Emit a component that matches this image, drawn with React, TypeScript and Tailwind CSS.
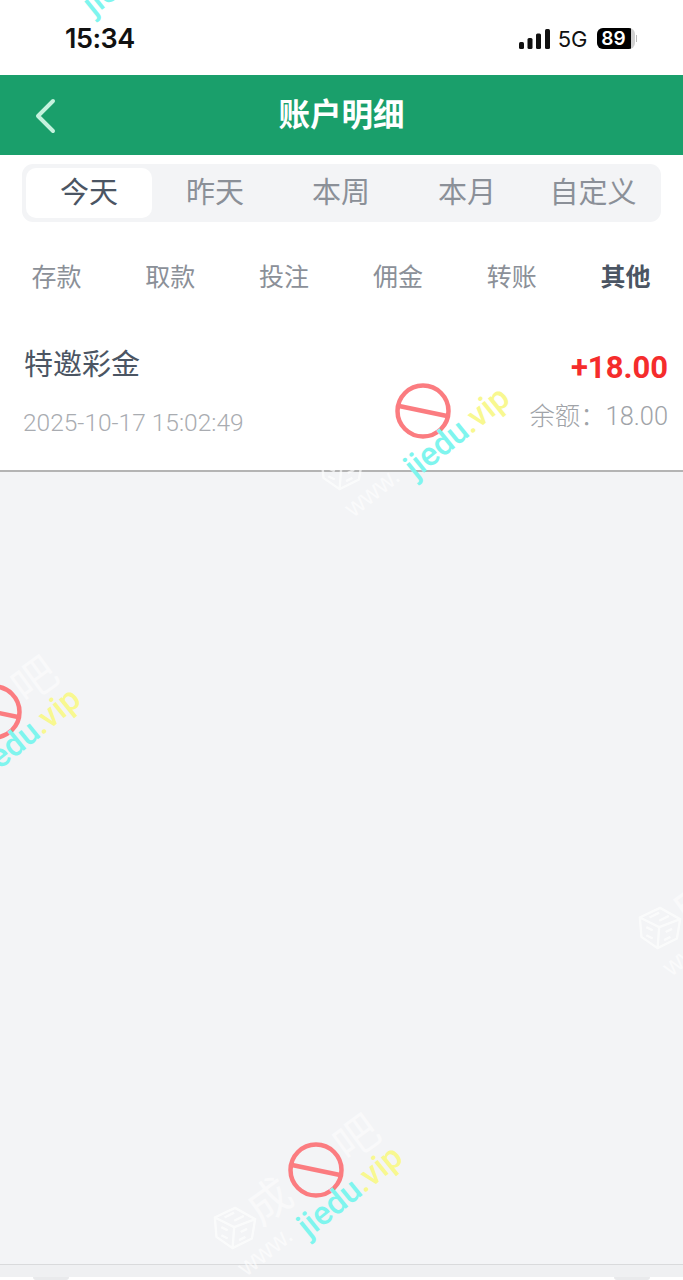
import React from 'react';

const cjk = "font-['Roboto','Noto_Sans_CJK_SC',sans-serif]";

const periods = ['今天', '昨天', '本周', '本月', '自定义'];
const filters = ['存款', '取款', '投注', '佣金', '转账', '其他'];

const StatusBar: React.FC = () => (
  <div className="flex h-[75px] items-center justify-between pl-[65px] pr-[46px] bg-white">
    <span className="text-[27px] font-semibold font-['Inter',sans-serif] text-[#111] leading-none tracking-[-0.5px] mt-[2px]">15:34</span>
    <div className="flex items-center mt-[2px]">
      <svg width="31" height="20" viewBox="0 0 31 20" fill="#111">
        <rect x="0" y="13" width="5" height="7" rx="1.5" />
        <rect x="8.5" y="9" width="5" height="11" rx="1.5" />
        <rect x="17" y="4.5" width="5" height="15.5" rx="1.5" />
        <rect x="26" y="0" width="5" height="20" rx="1.5" />
      </svg>
      <span className="ml-2 text-[22px] font-['Inter',sans-serif] text-[#111] leading-none">5G</span>
      <div className="ml-[9px] flex items-center">
        <div className="flex h-[21px] w-[38px] items-center rounded-[6px] overflow-hidden bg-[#d0d0d0]">
          <div className="flex h-full w-[34px] items-center justify-center bg-black text-white text-[19px] font-semibold font-['Inter',sans-serif] leading-none">89</div>
        </div>
        <div className="ml-[1px] h-[7px] w-[1.5px] bg-[#bbb]" />
      </div>
    </div>
  </div>
);

const Header: React.FC = () => (
  <div className="relative flex h-[80px] items-center justify-center bg-[#1a9f6b]">
    <svg className="absolute left-[33px] top-[23px]" width="26" height="36" viewBox="0 0 26 36" fill="none">
      <path d="M20 3 L5 18 L20 33" stroke="#c5f2de" strokeWidth="4" strokeLinecap="round" strokeLinejoin="round" />
    </svg>
    <span className={`text-[31.5px] font-bold leading-none text-white pt-[2px] ${cjk}`}>账户明细</span>
  </div>
);

const PeriodTabs: React.FC = () => (
  <div className="mx-[22px] mt-[9px] flex h-[58px] w-[639px] items-center rounded-[11px] bg-[#f3f4f6] pl-[4px]">
    {periods.map((p, i) => (
      <div
        key={p}
        className={`flex h-[50px] w-[126px] items-center justify-center rounded-[10px] pt-[2px] text-[29px] ${i === 0 ? 'bg-white text-[#4b5563]' : 'text-[#8b9098]'}`}
      >
        {p}
      </div>
    ))}
  </div>
);

const FilterRow: React.FC = () => (
  <div className="mt-[10px] grid h-[90px] grid-cols-6 items-center">
    {filters.map((f, i) => (
      <div key={f} className={`pt-[2px] pr-[1px] text-center text-[25px] ${i === 5 ? 'font-bold text-[#4b5563]' : 'text-[#8b9098]'}`}>
        {f}
      </div>
    ))}
  </div>
);

const Record: React.FC = () => (
  <div className="flex h-[150px] items-start justify-between border-b-2 border-[#b4b4b4] bg-white pl-[24px] pr-[15px]">
    <div className="flex flex-col">
      <span className="mt-[21px] text-[29px] leading-[44px] text-[#4b5563]">特邀彩金</span>
      <span className="ml-[-1px] mt-[20px] text-[24.5px] font-light leading-[32px] text-[#a9acb1]">2025-10-17 15:02:49</span>
    </div>
    <div className="flex flex-col items-end">
      <span className="mt-[26px] text-[31px] font-bold leading-[40px] text-[#f52c2c]">+18.00</span>
      <span className="mt-[11px] text-[25.4px] font-light leading-[34px] text-[#a0a3a8]">余额：18.00</span>
    </div>
  </div>
);

// site watermark repeated over the screenshot; x/y is the centre of the red circle
const Watermark: React.FC<{ className: string }> = ({ className }) => (
  <div className={`absolute h-0 w-0 ${className}`}>
    <div className="absolute left-[-50px] top-[16px] flex origin-bottom-left rotate-[-36deg] gap-[64px] whitespace-nowrap text-[44px] leading-[48px] text-white/50">
      <span>成</span>
      <span>吧</span>
    </div>
    <svg className="absolute left-[-29px] top-[-29px]" width="58" height="58" viewBox="0 0 58 58" fill="none">
      <circle cx="29" cy="29" r="25.5" stroke="#fb7c80" strokeWidth="4.5" />
      <path d="M5 24 L53 34" stroke="#fb7c80" strokeWidth="4.5" />
    </svg>
    <div className="absolute left-[-3px] top-[38px] origin-bottom-left rotate-[-39deg] whitespace-nowrap font-['Roboto',sans-serif] text-[33px] font-medium leading-[36px]">
      <span className="text-[#7ff5ee]">jiedu</span>
      <span className="text-[#f8f890]">.vip</span>
    </div>
    <svg className="absolute left-[-106px] top-[33px]" width="50" height="50" viewBox="0 0 62 62" fill="none" stroke="#ffffff" strokeWidth="3" opacity="0.65">
      <path d="M31 6 L56 20 L52 44 L28 56 L8 42 L6 18 Z M6 18 L30 30 L56 20 M30 30 L28 56" />
      <path d="M18 18 L30 12 M30 22 L42 16 M14 30 L22 34 M14 40 L22 44 M38 36 L46 32 M36 46 L44 42" />
    </svg>
    <div className="absolute left-[-66px] top-[82px] origin-bottom-left rotate-[-39deg] whitespace-nowrap font-['Liberation_Sans',sans-serif] text-[26px] leading-[30px] text-white/60">
      www.
    </div>
  </div>
);

const App: React.FC = () => {
  return (
    <div className={`relative h-[1280px] w-[683px] overflow-hidden bg-[#f3f4f6] ${cjk}`}>
      <div className="bg-white">
        <StatusBar />
        <Header />
        <PeriodTabs />
        <FilterRow />
        <Record />
      </div>

      {/* bottom strip, only its top edge is in the picture */}
      <div className="absolute inset-x-0 top-[1264px] h-[16px] border-t border-[#d9dadc] bg-[#eff0f2]">
        <div className="mt-[12px] flex h-[3px] justify-between bg-white px-[33px]">
          <div className="h-[3px] w-[36px] rounded-b-[6px] bg-[#e9eaec]" />
          <div className="h-[3px] w-[36px] rounded-b-[6px] bg-[#e9eaec]" />
        </div>
      </div>

      <Watermark className="left-[423px] top-[411px]" />
      <Watermark className="left-[-6px] top-[712px]" />
      <Watermark className="left-[316px] top-[1170px]" />
      <Watermark className="left-[101px] top-[-52px]" />
      <Watermark className="left-[741px] top-[870px]" />
    </div>
  );
};

export default App;
